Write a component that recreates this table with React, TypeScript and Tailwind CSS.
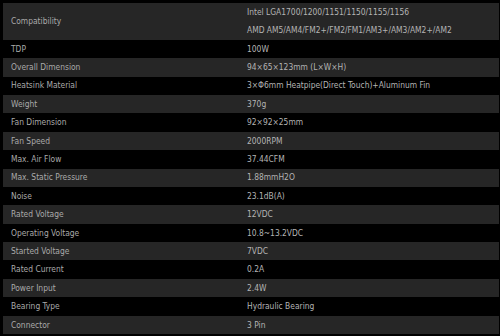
import React from "react";

const rows: [string, string][] = [
  ["TDP", "100W"],
  ["Overall Dimension", "94×65×123mm (L×W×H)"],
  ["Heatsink Material", "3×Φ6mm Heatpipe(Direct Touch)+Aluminum Fin"],
  ["Weight", "370g"],
  ["Fan Dimension", "92×92×25mm"],
  ["Fan Speed", "2000RPM"],
  ["Max. Air Flow", "37.44CFM"],
  ["Max. Static Pressure", "1.88mmH2O"],
  ["Noise", "23.1dB(A)"],
  ["Rated Voltage", "12VDC"],
  ["Operating Voltage", "10.8~13.2VDC"],
  ["Started Voltage", "7VDC"],
  ["Rated Current", "0.2A"],
  ["Power Input", "2.4W"],
  ["Bearing Type", "Hydraulic Bearing"],
  ["Connector", "3 Pin"],
];

export default function App() {
  return (
    <div
      className="w-[500px] h-[336px] bg-black pt-[3px] pl-[3px] pr-[1px] text-[8.4px] text-[#b4b4b4] overflow-hidden"
      style={{ fontFamily: '"DejaVu Sans Condensed", "DejaVu Sans", sans-serif' }}
    >
      <div className="flex flex-col">
        <div className="grid grid-cols-[244px_1fr] h-[36.8px] bg-[#262626]">
          <div className="flex items-center pl-[8px] text-[#aaaaaa]">Compatibility</div>
          <div className="flex flex-col">
            <div className="h-[18.4px] flex items-center">Intel LGA1700/1200/1151/1150/1155/1156</div>
            <div className="h-[18.4px] flex items-center">AMD AM5/AM4/FM2+/FM2/FM1/AM3+/AM3/AM2+/AM2</div>
          </div>
        </div>
        {rows.map(([k, v], i) => (
          <div
            key={k}
            className={`grid grid-cols-[244px_1fr] h-[18.4px] ${i % 2 === 1 ? "bg-[#262626]" : "bg-black"}`}
          >
            <div className="flex items-center pl-[8px] text-[#aaaaaa]">{k}</div>
            <div className="flex items-center">{v}</div>
          </div>
        ))}
      </div>
    </div>
  );
}
